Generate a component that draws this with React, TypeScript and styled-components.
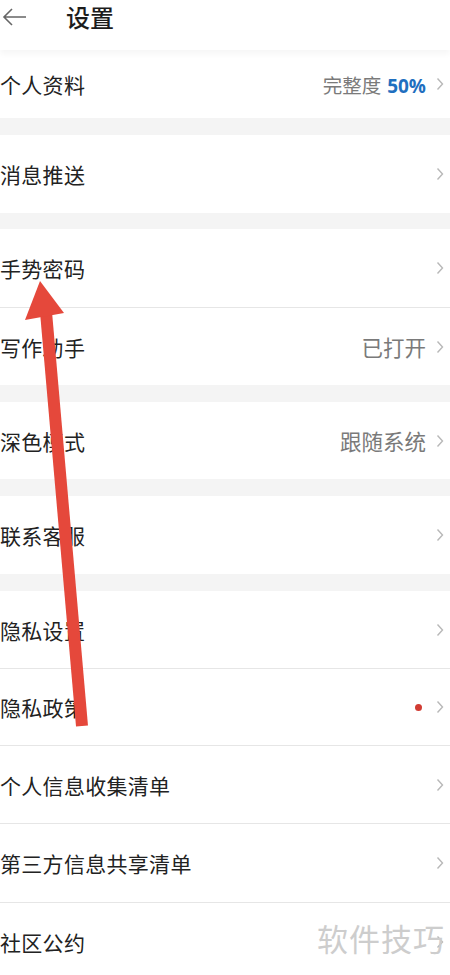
import styled, { createGlobalStyle } from 'styled-components';

const Global = createGlobalStyle`
  html, body { margin: 0; padding: 0; background: #fff; }
  body { font-family: "Noto Sans CJK SC", "Noto Sans", sans-serif; }
`;

const Page = styled.div`
  position: relative;
  width: 450px;
  height: 975px;
  overflow: hidden;
  background: #fff;
`;

const Header = styled.div`
  position: relative;
  z-index: 1;
  height: 50px;
  display: flex;
  align-items: center;
  gap: 38px;
  padding-left: 2px;
  background: #fff;
  box-shadow: 0 4px 6px rgba(0, 0, 0, 0.04);
`;

const Title = styled.h1`
  margin: 0;
  font-size: 24px;
  font-weight: 500;
  color: #1c1c1c;
  line-height: 1;
  margin-top: -17px;
`;

const BackBtn = styled.svg`
  margin-top: -16px;
`;

const Gap = styled.div<{ $h: number }>`
  height: ${(p) => p.$h}px;
  background: #f4f4f4;
`;

const Row = styled.div<{ $h: number; $line?: boolean }>`
  height: ${(p) => p.$h}px;
  display: flex;
  align-items: center;
  justify-content: space-between;
  padding-right: 6px;
  box-sizing: border-box;
  border-top: ${(p) => (p.$line ? '1px solid #e6e6e6' : 'none')};
  background: #fff;
`;

const Label = styled.span`
  font-size: 21px;
  color: #222;
  letter-spacing: 0.3px;
`;

const Right = styled.div`
  display: flex;
  align-items: center;
  gap: 10px;
`;

const Value = styled.span<{ $size?: number }>`
  font-size: ${(p) => p.$size ?? 21.5}px;
  color: #7a7a7a;
`;

const Percent = styled.span`
  font-family: "Open Sans", "Liberation Sans", sans-serif;
  font-weight: 700;
  font-size: 19px;
  color: #1f6fbf;
  margin-left: 6px;
`;

const Dot = styled.span`
  width: 7px;
  height: 7px;
  border-radius: 50%;
  background: #d13c33;
  margin-right: 4px;
`;

const Watermark = styled.div`
  position: absolute;
  right: 5px;
  bottom: 15px;
  font-size: 31px;
  color: #cdcdcd;
  letter-spacing: 1px;
`;

const Overlay = styled.svg`
  position: absolute;
  left: 0;
  top: 0;
  pointer-events: none;
`;

function Chevron() {
  return (
    <svg width="8" height="14" viewBox="0 0 8 14">
      <path d="M1.5 1.5 L6.5 7 L1.5 12.5" fill="none" stroke="#b8b8b8" strokeWidth="1.4" />
    </svg>
  );
}

type Item = {
  label: string;
  h: number;
  line?: boolean;
  value?: React.ReactNode;
  dot?: boolean;
};

function SettingRow({ item }: { item: Item }) {
  return (
    <Row $h={item.h} $line={item.line}>
      <Label>{item.label}</Label>
      <Right>
        {item.dot ? <Dot /> : null}
        {item.value}
        <Chevron />
      </Right>
    </Row>
  );
}

export default function App() {
  return (
    <Page>
      <Global />
      <Header>
        <BackBtn width="26" height="20" viewBox="0 0 26 20">
          <path d="M24 10 H2 M10 2 L2 10 L10 18" fill="none" stroke="#666" strokeWidth="1.6" />
        </BackBtn>
        <Title>设置</Title>
      </Header>
      <SettingRow
        item={{
          label: '个人资料',
          h: 68,
          value: (
            <Value $size={19.5}>
              完整度<Percent>50%</Percent>
            </Value>
          ),
        }}
      />
      <Gap $h={17} />
      <SettingRow item={{ label: '消息推送', h: 78 }} />
      <Gap $h={16} />
      <SettingRow item={{ label: '手势密码', h: 78 }} />
      <SettingRow item={{ label: '写作助手', h: 78, line: true, value: <Value>已打开</Value> }} />
      <Gap $h={17} />
      <SettingRow item={{ label: '深色模式', h: 77, value: <Value>跟随系统</Value> }} />
      <Gap $h={17} />
      <SettingRow item={{ label: '联系客服', h: 78 }} />
      <Gap $h={17} />
      <SettingRow item={{ label: '隐私设置', h: 77 }} />
      <SettingRow item={{ label: '隐私政策', h: 77, line: true, dot: true }} />
      <SettingRow item={{ label: '个人信息收集清单', h: 78, line: true }} />
      <SettingRow item={{ label: '第三方信息共享清单', h: 79, line: true }} />
      <SettingRow item={{ label: '社区公约', h: 78, line: true }} />
      <Watermark>软件技巧</Watermark>
      <Overlay width="450" height="975" viewBox="0 0 450 975">
        <line x1="46" y1="312" x2="82" y2="726" stroke="#e5483b" strokeWidth="12" />
        <polygon points="40,281 25,320 64,313" fill="#e5483b" />
      </Overlay>
    </Page>
  );
}
